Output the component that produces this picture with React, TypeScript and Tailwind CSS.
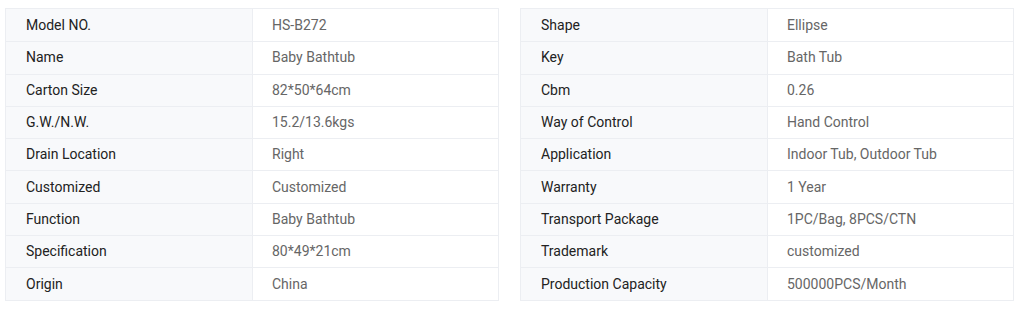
const leftRows: [string, string][] = [
  ['Model NO.', 'HS-B272'],
  ['Name', 'Baby Bathtub'],
  ['Carton Size', '82*50*64cm'],
  ['G.W./N.W.', '15.2/13.6kgs'],
  ['Drain Location', 'Right'],
  ['Customized', 'Customized'],
  ['Function', 'Baby Bathtub'],
  ['Specification', '80*49*21cm'],
  ['Origin', 'China']
]

const rightRows: [string, string][] = [
  ['Shape', 'Ellipse'],
  ['Key', 'Bath Tub'],
  ['Cbm', '0.26'],
  ['Way of Control', 'Hand Control'],
  ['Application', 'Indoor Tub, Outdoor Tub'],
  ['Warranty', '1 Year'],
  ['Transport Package', '1PC/Bag, 8PCS/CTN'],
  ['Trademark', 'customized'],
  ['Production Capacity', '500000PCS/Month']
]

const SpecTable = ({ rows }: { rows: [string, string][] }) => (
  <div className="w-[494px] border border-[#eceef2] bg-white">
    {rows.map(([label, value], index) => (
      <div
        key={label}
        className={`flex h-[32.3px] ${index > 0 ? 'border-t border-[#eceef2]' : ''}`}
      >
        <div className="flex items-center w-[247px] shrink-0 bg-[#f8f9fb] border-r border-[#eceef2] pl-[20px] text-[14px] text-[#222]">
          {label}
        </div>
        <div className="flex items-center flex-1 pl-[19px] text-[14px] text-[#666]">{value}</div>
      </div>
    ))}
  </div>
)

export default function App() {
  return (
    <div
      className="flex items-start gap-[21px] pl-[5px] pt-[8px] bg-white h-[310px]"
      style={{ fontFamily: 'Roboto, "Liberation Sans", sans-serif' }}
    >
      <SpecTable rows={leftRows} />
      <SpecTable rows={rightRows} />
    </div>
  )
}
